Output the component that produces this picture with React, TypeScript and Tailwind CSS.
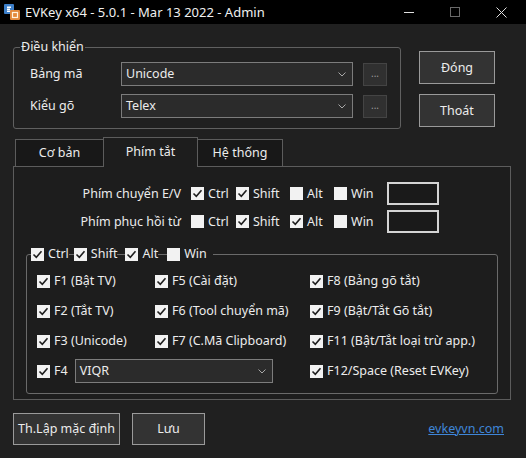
import React from 'react';

const font = { fontFamily: '"Noto Sans", "Open Sans", sans-serif' };

function Check({ checked }: { checked: boolean }) {
  return (
    <span className="w-[13px] h-[13px] bg-[#f2f2f2] flex items-center justify-center shrink-0">
      {checked && (
        <svg width="13" height="13" viewBox="0 0 13 13">
          <path d="M2.5 6.5 L5.3 9.3 L10.5 3.3" fill="none" stroke="#1e1e1e" strokeWidth="1.6" />
        </svg>
      )}
    </span>
  );
}

function CheckItem({ checked, label, className = '' }: { checked: boolean; label: string; className?: string }) {
  return (
    <div className={`flex items-center gap-[4px] ${className}`}>
      <Check checked={checked} />
      <span className="whitespace-nowrap">{label}</span>
    </div>
  );
}

function Chevron() {
  return (
    <svg width="8" height="5" viewBox="0 0 8 5" className="shrink-0">
      <path d="M0.5 0.5 L4 4 L7.5 0.5" fill="none" stroke="#a8a8a8" strokeWidth="1" />
    </svg>
  );
}

function Combo({ value, className = '' }: { value: string; className?: string }) {
  return (
    <div className={`h-[24px] bg-[#2b2b2b] border border-[#7c7c7c] flex items-center pl-[4px] pr-[6px] ${className}`}>
      <span className="flex-1">{value}</span>
      <Chevron />
    </div>
  );
}

function Dots() {
  return (
    <div className="w-[24px] h-[23px] bg-[#303030] border border-[#444444] flex items-center justify-center text-[#9a9a9a] text-[10px] leading-none pb-[2px]">
      ...
    </div>
  );
}

function Btn({ label, className = '' }: { label: string; className?: string }) {
  return (
    <div className={`bg-[#333333] border border-[#9a9a9a] flex items-center justify-center ${className}`}>{label}</div>
  );
}

export default function App() {
  const rows: [boolean, string][][] = [
    [[true, 'F1 (Bật TV)'], [true, 'F5 (Cài đặt)'], [true, 'F8 (Bảng gõ tắt)']],
    [[true, 'F2 (Tắt TV)'], [true, 'F6 (Tool chuyển mã)'], [true, 'F9 (Bật/Tắt Gõ tắt)']],
    [[true, 'F3 (Unicode)'], [true, 'F7 (C.Mã Clipboard)'], [true, 'F11 (Bật/Tắt loại trừ app.)']],
  ];

  return (
    <div style={font} className="w-[526px] h-[458px] bg-[#202020] text-[#ececec] text-[12.5px] leading-[18px] overflow-hidden">
      {/* Title bar */}
      <div className="h-[24px] bg-black flex items-center text-[#f0f0f0] text-[13px]">
        <svg width="18" height="18" viewBox="0 0 18 18" className="ml-[3px]">
          <rect x="1" y="1" width="10" height="10" rx="1" fill="#3d7fc9" />
          <rect x="4" y="3.5" width="4" height="1.5" fill="#ffffff" />
          <rect x="4" y="5.5" width="3" height="1.5" fill="#ffffff" />
          <rect x="4" y="7.5" width="4" height="1.5" fill="#ffffff" />
          <rect x="7" y="7" width="10" height="10" rx="1" fill="#e3893b" />
          <rect x="9.5" y="9.5" width="5" height="5" fill="none" stroke="#fff3e0" strokeWidth="1.2" />
        </svg>
        <span className="ml-[4px]">EVKey x64 - 5.0.1 - Mar 13 2022 - Admin</span>
        <div className="ml-auto flex items-center h-full">
          <svg width="11" height="11" viewBox="0 0 11 11" className="mr-[35px]">
            <path d="M0 5.5 H10" stroke="#e0e0e0" strokeWidth="1" />
          </svg>
          <svg width="10" height="10" viewBox="0 0 10 10" className="mr-[36px]">
            <rect x="0.5" y="0.5" width="9" height="9" fill="none" stroke="#6a6a6a" strokeWidth="1" />
          </svg>
          <svg width="11" height="11" viewBox="0 0 11 11" className="mr-[19px]">
            <path d="M0.5 0.5 L10.5 10.5 M10.5 0.5 L0.5 10.5" stroke="#e0e0e0" strokeWidth="1" />
          </svg>
        </div>
      </div>

      <div className="pl-[13px]">
        {/* Top section */}
        <div className="flex pt-[14px]">
          <fieldset className="w-[388px] h-[91px] border border-[#606060] rounded-[3px] px-0">
            <legend className="ml-[6px] px-[1px]">Điều khiển</legend>
            <div className="flex flex-col gap-[8px] pl-[16px] mt-[6px]">
              <div className="flex items-center">
                <span className="w-[91px]">Bảng mã</span>
                <Combo value="Unicode" className="w-[232px]" />
                <div className="ml-[10px]"><Dots /></div>
              </div>
              <div className="flex items-center">
                <span className="w-[91px]">Kiểu gõ</span>
                <Combo value="Telex" className="w-[232px]" />
                <div className="ml-[10px]"><Dots /></div>
              </div>
            </div>
          </fieldset>
          <div className="ml-[18px] mt-[13px] flex flex-col gap-[10px]">
            <Btn label="Đóng" className="w-[76px] h-[33px]" />
            <Btn label="Thoát" className="w-[76px] h-[33px]" />
          </div>
        </div>

        {/* Tabs */}
        <div className="mt-[8px] h-[29px] flex items-end pl-[2px]">
          <div className="w-[88px] h-[27px] bg-[#181818] border border-b-0 border-r-0 border-[#5c5c5c] flex items-center justify-center">
            Cơ bản
          </div>
          <div className="relative z-10 w-[95px] h-[30px] -mb-px bg-[#1d1d1d] border border-b-0 border-[#5c5c5c] flex items-start justify-center pt-[5px]">
            Phím tắt
          </div>
          <div className="w-[85px] h-[27px] bg-[#181818] border border-b-0 border-l-0 border-[#5c5c5c] flex items-center justify-center">
            Hệ thống
          </div>
        </div>

        {/* Tab panel */}
        <div className="w-[498px] h-[234px] bg-[#1d1d1d] border border-[#5c5c5c] pt-[15px]">
          <div className="flex items-center h-[23px]">
            <span className="w-[167px] text-right">Phím chuyển E/V</span>
            <div className="ml-[10px] flex items-center">
              <CheckItem checked label="Ctrl" className="w-[45px]" />
              <CheckItem checked label="Shift" className="w-[54px]" />
              <CheckItem checked={false} label="Alt" className="w-[44px]" />
              <CheckItem checked={false} label="Win" className="w-[53px]" />
              <div className="w-[52px] h-[23px] border-2 border-[#d4d4d4] bg-[#1a1a1a]" />
            </div>
          </div>
          <div className="flex items-center h-[23px] mt-[5px]">
            <span className="w-[167px] text-right">Phím phục hồi từ</span>
            <div className="ml-[10px] flex items-center">
              <CheckItem checked={false} label="Ctrl" className="w-[45px]" />
              <CheckItem checked label="Shift" className="w-[54px]" />
              <CheckItem checked label="Alt" className="w-[44px]" />
              <CheckItem checked={false} label="Win" className="w-[53px]" />
              <div className="w-[52px] h-[23px] border-2 border-[#d4d4d4] bg-[#1a1a1a]" />
            </div>
          </div>

          <fieldset className="ml-[12px] mt-[12px] w-[472px] h-[149px] border border-[#6a6a6a] rounded-[3px] px-0">
            <legend className="ml-[4px] px-0">
              <div className="flex items-center">
                <CheckItem checked label="Ctrl" />
                <span className="w-[5px] h-px bg-[#6a6a6a]" />
                <CheckItem checked label="Shift" />
                <span className="w-[8px] h-px bg-[#6a6a6a]" />
                <CheckItem checked label="Alt" />
                <span className="w-[9px] h-px bg-[#6a6a6a]" />
                <CheckItem checked={false} label="Win" />
                <span className="w-[6px]" />
              </div>
            </legend>
            <div className="mt-[3px] pl-[10px]">
              {rows.map((r, i) => (
                <div key={i} className="flex items-center h-[30px]">
                  <CheckItem checked={r[0][0]} label={r[0][1]} className="w-[118px]" />
                  <CheckItem checked={r[1][0]} label={r[1][1]} className="w-[155px]" />
                  <CheckItem checked={r[2][0]} label={r[2][1]} />
                </div>
              ))}
              <div className="flex items-center h-[30px]">
                <div className="w-[118px] flex items-center">
                  <CheckItem checked label="F4" />
                  <Combo value="VIQR" className="ml-[7px] w-[198px] shrink-0" />
                </div>
                <div className="w-[155px]" />
                <CheckItem checked label="F12/Space (Reset EVKey)" />
              </div>
            </div>
          </fieldset>
        </div>

        {/* Bottom */}
        <div className="mt-[13px] flex items-center">
          <Btn label="Th.Lập mặc định" className="w-[107px] h-[32px]" />
          <Btn label="Lưu" className="ml-[12px] w-[73px] h-[32px]" />
          <a className="ml-auto mr-[22px] text-[#3f86d8] underline">evkeyvn.com</a>
        </div>
      </div>
    </div>
  );
}
